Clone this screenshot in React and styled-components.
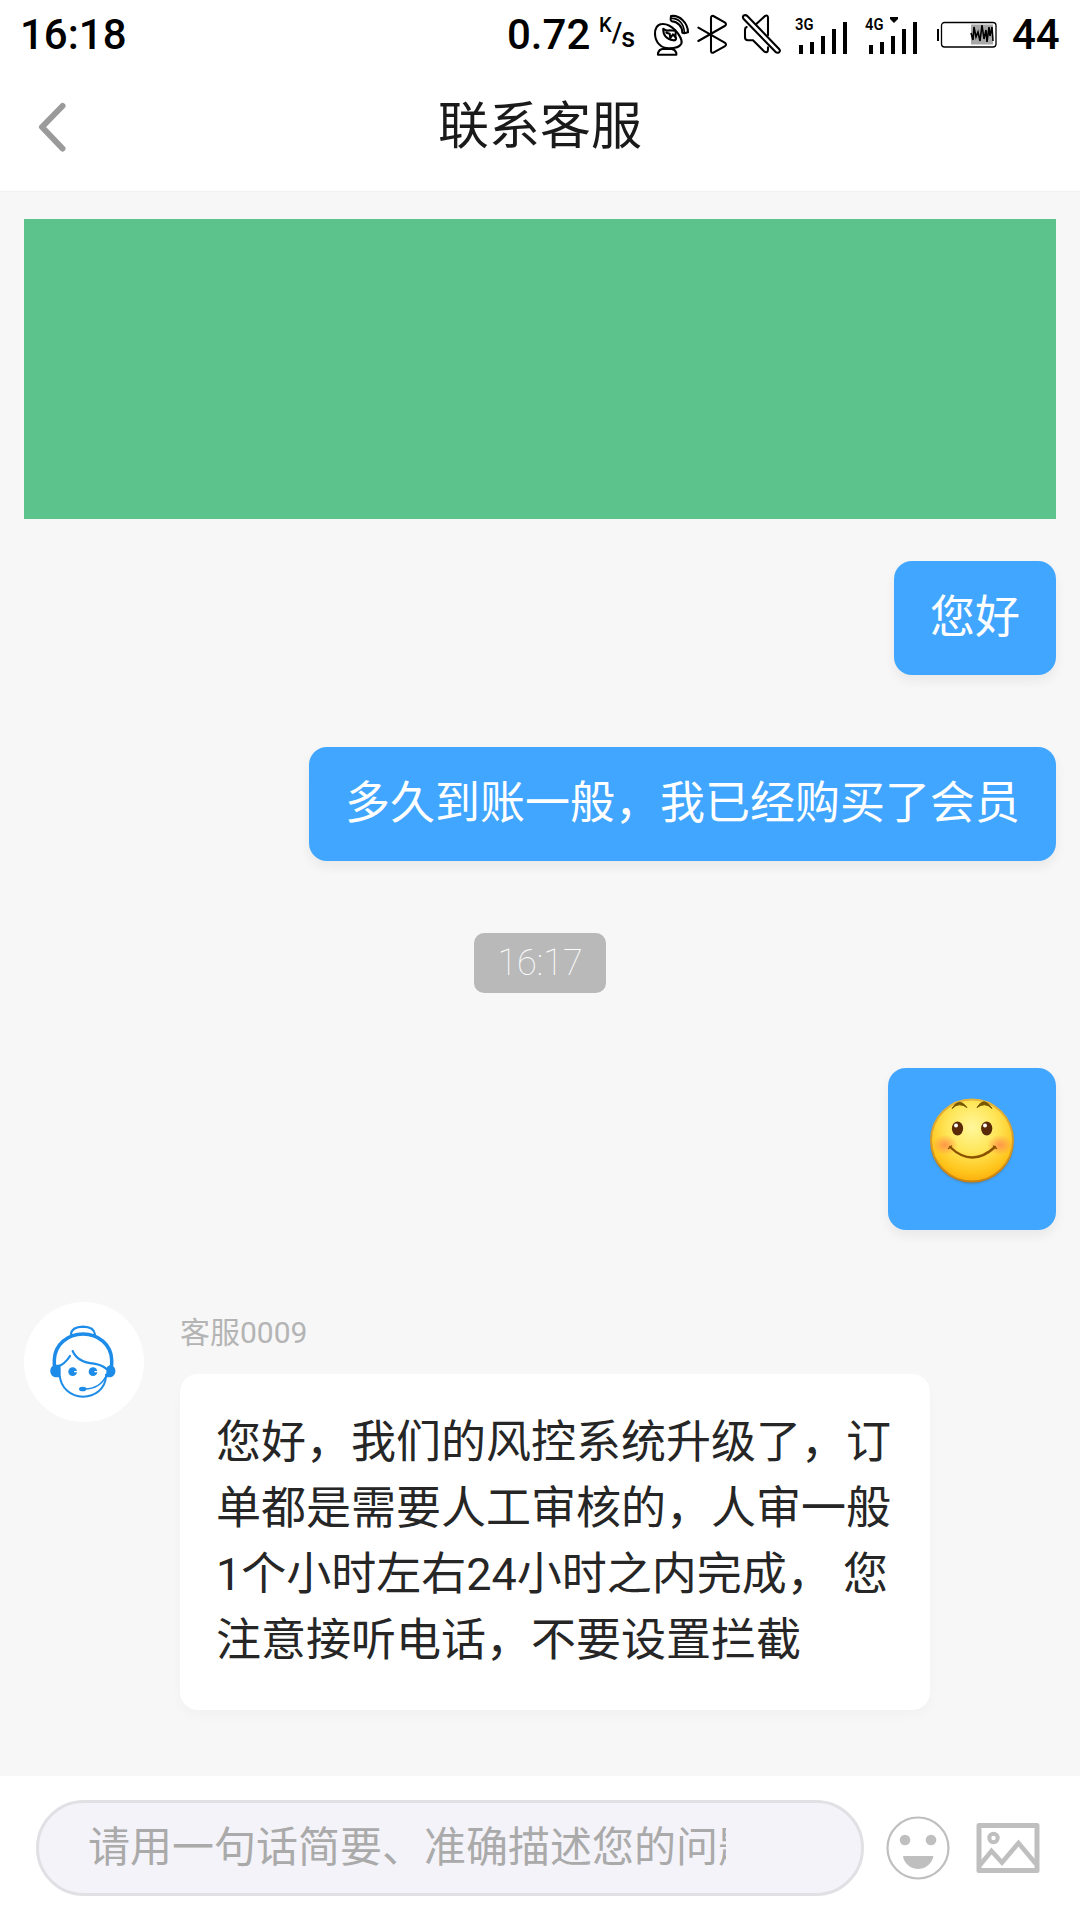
import React from 'react';
import styled, { createGlobalStyle } from 'styled-components';

const GlobalStyle = createGlobalStyle`
  * {
    box-sizing: border-box;
  }

  body {
    margin: 0;
    background: #f7f7f7;
    font-family: Roboto, 'Noto Sans CJK SC', sans-serif;
  }
`;

const DishIcon = () => (
  <svg width="40" height="46" viewBox="456 36 120 138" fill="none" stroke="#000" strokeWidth="6.2" strokeLinejoin="round" strokeLinecap="round">
    <path d="M474 164v-5q4-11 13-12h28q11 2 14 12v5z" />
    <path d="M486 72c-14 0-22 15-21 30 1 24 17 43 42 43 17 0 32-5 37-14 4-9-5-27-19-41-12-12-27-19-39-18z" />
    <path d="M490 86c-1 15 6 31 30 35 9 1 10-6 5-13" />
    <path d="M491 87q9 7 17 4l17 1q4 1 2 6l-1 13-7-8-8 11-2-13-10-3" />
    <path d="M513 48c26-4 51 21 51 49l-11 3-6-2c0-19-14-33-32-34l-3-5z" />
    <path d="M516 55c21 0 36 17 37 42" strokeWidth="5" />
  </svg>
);

const BluetoothIcon = () => (
  <svg width="34" height="46" viewBox="588 36 102 138" fill="none" stroke="#000" strokeWidth="6.2" strokeLinejoin="round" strokeLinecap="round">
    <path d="M595 83l79 45q8 6 0 11l-34 19q-7 2-7-6V54q0-8 7-6l34 19q8 6 0 11l-79 45" />
  </svg>
);

const MuteIcon = () => (
  <svg width="42" height="46" viewBox="723 36 126 138" fill="none" stroke="#000" strokeWidth="6.2" strokeLinejoin="round" strokeLinecap="round">
    <path d="M769 72l26-24q8-4 9 4v54M740 81q-5 2-5 8v23q0 9 9 9h15l33 33q12 7 12-6v-6" />
    <path d="M730 47q7-4 12 1l96 100q4 5-1 9-6 3-10-1L731 57q-4-5-1-10z" fill="#fff" />
  </svg>
);

const SignalIcon = ({ label, active }) => (
  <svg width="54" height="42" viewBox="0 0 54 42" fill="#000">
    <text x="0" y="16" fontFamily="Roboto" fontSize="16" fontWeight="600" textLength="18.500" lengthAdjust="spacingAndGlyphs">{label}</text>
    <path d="M4 31h4v9H4zM15 28h4v12h-4zM26 22h4v18h-4zM37 15h4v25h-4zM48 8h4v32h-4z" />
    {active && <path d="M25 3h8v2l-4 4-4-4z" />}
  </svg>
);

const BatteryIcon = () => (
  <svg width="60" height="28" viewBox="0 0 60 28" fill="none">
    <rect x="4.5" y="1.5" width="54.500" height="24.500" rx="3" stroke="#000" strokeWidth="1.3" />
    <path d="M0 8h2v12H0z" fill="#000" />
    <rect x="34" y="3.500" width="22" height="20" fill="#a8a8a8" />
    <path d="M34 12l2 7 1-13 2 10 2-5 2 9 2-16 2 14 2-9 1 12 2-15 1 9 2-9 1 14" stroke="#000" strokeWidth="1.6" />
  </svg>
);

const BackIcon = () => (
  <svg width="28" height="50" viewBox="0 0 28 50" fill="none" stroke="#9a9a9a" strokeWidth="6" strokeLinecap="round" strokeLinejoin="round">
    <path d="M24.5 4L4 25l20.5 21.5" />
  </svg>
);

const SmileEmoji = () => (
  <svg width="86" height="88" viewBox="0 0 86 88">
    <defs>
      <radialGradient id="face" cx="50%" cy="34%" r="65%">
        <stop offset="0" stopColor="#fff79b" />
        <stop offset="0.45" stopColor="#ffe75c" />
        <stop offset="0.85" stopColor="#ffc51c" />
        <stop offset="1" stopColor="#fdb00e" />
      </radialGradient>
      <radialGradient id="cheek">
        <stop offset="0" stopColor="#ff8a4c" stopOpacity="0.85" />
        <stop offset="1" stopColor="#ff8a4c" stopOpacity="0" />
      </radialGradient>
      <linearGradient id="rim" x1="0" y1="0" x2="0" y2="1">
        <stop offset="0" stopColor="#e8b53c" />
        <stop offset="1" stopColor="#c98210" />
      </linearGradient>
      <filter id="soft" x="-20%" y="-20%" width="140%" height="140%">
        <feGaussianBlur stdDeviation="1.2" />
      </filter>
    </defs>
    <circle cx="42" cy="44" r="41.500" fill="#4d6a62" opacity="0.6" filter="url(#soft)" />
    <circle cx="42" cy="42.500" r="41" fill="url(#face)" stroke="url(#rim)" strokeWidth="2" />
    <ellipse cx="15" cy="47" rx="13" ry="10" fill="url(#cheek)" />
    <ellipse cx="70" cy="47" rx="13" ry="10" fill="url(#cheek)" />
    <path d="M22 10.500q7-12 15-1-8-6-15 1zM47 9.500q7-12 15 1-7-7-15-1z" fill="#785800" stroke="#785800" strokeWidth="1" />
    <ellipse cx="27.500" cy="30.500" rx="5.600" ry="7" fill="#5a2a06" />
    <ellipse cx="56.700" cy="30.500" rx="5.600" ry="7" fill="#5a2a06" />
    <circle cx="26" cy="27.500" r="2" fill="#fff" />
    <circle cx="55" cy="27.500" r="2" fill="#fff" />
    <path d="M20 49q22 21 45 0" fill="none" stroke="#8b5200" strokeWidth="2.400" strokeLinecap="round" />
    <path d="M18.500 50.500l3-2.500M63.500 48l3 2.500" stroke="#8b5200" strokeWidth="1.500" strokeLinecap="round" />
  </svg>
);

const AgentIcon = () => (
  <svg width="66" height="74" viewBox="152 136 198 222" fill="none" stroke="#1c8ce8" strokeWidth="6.500" strokeLinecap="round">
    <path d="M215 164q2-22 36-23 33 1 36 23" />
    <path d="M165 256v-16c2-46 40-77 86-77s84 31 86 77v16" strokeWidth="10.500" />
    <path d="M180 258c5 0 22-12 32-29M220 214c12 28 42 36 64 38q25 4 40 18" />
    <path d="M181 262v24c3 40 34 65 70 65s66-23 69-60v-6" strokeWidth="6" />
    <path d="M178 255h-12c-18 6-18 33 2 38h14v-32zM323 262l10-7c20 4 20 33 2 38h-16z" fill="#1c8ce8" stroke="none" />
    <path d="M322 286q-20 42-66 42" strokeWidth="5" />
    <ellipse cx="250" cy="328" rx="11" ry="7" fill="#1c8ce8" stroke="none" />
    <circle cx="220" cy="276" r="13" fill="#1c8ce8" stroke="none" />
    <circle cx="281" cy="276" r="13" fill="#1c8ce8" stroke="none" />
    <path d="M226 276h7M287 276h7" stroke="#fff" strokeWidth="4" />
  </svg>
);

const FaceIcon = () => (
  <svg width="64" height="64" viewBox="0 0 64 64" fill="#bfbfbf">
    <circle cx="32" cy="32" r="30.500" fill="none" stroke="#bfbfbf" strokeWidth="2.200" />
    <circle cx="19" cy="24" r="5.300" />
    <circle cx="45" cy="24" r="5.300" />
    <path d="M18 40h28.500c1 0 1 .6.500 2-3 7.500-8.500 11-14.800 11S20 49.500 17.300 42c-.4-1.400-.3-2 .7-2z" />
  </svg>
);

const PictureIcon = () => (
  <svg width="64" height="50" viewBox="0 0 64 50" fill="none" stroke="#bfbfbf">
    <rect x="3" y="2.500" width="58" height="45" strokeWidth="5" strokeLinejoin="round" />
    <circle cx="17.500" cy="15" r="4.200" strokeWidth="4" />
    <path d="M4 42l11.500-14L26 39.500 42.500 20 60 41" strokeWidth="4.600" />
  </svg>
);

const Screen = styled.div`
  display: flex;
  flex-direction: column;
  width: 1080px;
  height: 1920px;
  overflow: hidden;
  background: #f7f7f7;
`;

const StatusBar = styled.div`
  display: flex;
  flex: none;
  align-items: center;
  height: 70px;
  padding: 0 20px;
  background: #fff;
  color: #000;
  font-size: 42px;
  font-weight: 500;
  line-height: 70px;
  white-space: nowrap;

  svg {
    flex: none;
  }
`;

const Clock = styled.div`
  width: 487px;
`;

const Speed = styled.div`
  width: 92px;
`;

const SpeedUnit = styled.div`
  display: flex;
  align-items: flex-start;
  width: 53px;
  height: 46px;
  font-size: 20px;
  line-height: 22px;

  span:nth-child(1) {
    margin-top: 2px;
  }

  span:nth-child(2) {
    margin: 10px -1px 0 0;
    font-size: 27px;
  }

  span:nth-child(3) {
    margin-top: 15px;
    font-size: 27px;
  }
`;

const StatusIcons = styled.div`
  display: flex;
  align-items: center;
  gap: ${props => props.gap}px;
  margin-right: ${props => props.after}px;
`;

const Header = styled.div`
  display: grid;
  flex: none;
  grid-template-columns: 100px 1fr 100px;
  align-items: center;
  height: 122px;
  padding-bottom: 7px;
  background: #fff;
  border-bottom: 1px solid #f1f1f1;
`;

const BackButton = styled.div`
  display: flex;
  padding-left: 38px;
`;

const Title = styled.div`
  color: #1a1a1a;
  font-size: 51px;
  line-height: 60px;
  text-align: center;
`;

const Messages = styled.div`
  display: flex;
  flex-direction: column;
  align-items: flex-end;
  flex: 1;
  min-height: 0;
  padding: 27px 24px 0;

  > * {
    flex-shrink: 0;
  }
`;

const Banner = styled.div`
  width: 100%;
  height: 300px;
  margin-bottom: 42px;
  background: #5dc38c;
`;

const Bubble = styled.div`
  padding: 24px 36px;
  margin-bottom: 72px;
  border-radius: 18px;
  background: #41a6ff;
  box-shadow: 0 6px 12px rgba(0, 0, 0, 0.06);
  color: #fff;
  font-size: 45px;
  line-height: 66px;
`;

const EmojiBubble = styled(Bubble)`
  width: 168px;
  height: 162px;
  padding: 30px 42px;
  line-height: 0;
`;

const TimeChip = styled.div`
  align-self: center;
  width: 132px;
  height: 60px;
  margin-bottom: 75px;
  border-radius: 10px;
  background: #b9b9b9;
  color: #fff;
  font-size: 36px;
  font-weight: 100;
  line-height: 60px;
  text-align: center;
`;

const Reply = styled.div`
  display: flex;
  align-self: flex-start;
  gap: 36px;
`;

const Avatar = styled.div`
  display: flex;
  justify-content: center;
  width: 120px;
  height: 120px;
  padding: 23px 2px 0 0;
  border-radius: 50%;
  background: #fff;
`;

const AgentName = styled.div`
  height: 72px;
  color: #b4b4b4;
  font-size: 30px;
  line-height: 62px;
`;

const ReplyBubble = styled(Bubble)`
  width: 750px;
  margin-bottom: 0;
  padding: 36px;
  background: #fff;
  box-shadow: 0 6px 12px rgba(0, 0, 0, 0.025);
  color: #262626;
  white-space: nowrap;
`;

const Composer = styled.div`
  display: flex;
  flex: none;
  align-items: center;
  height: 144px;
  padding-left: 36px;
  background: #fff;
`;

const Field = styled.div`
  width: 828px;
  height: 96px;
  margin-right: 22px;
  padding: 0 135px 0 49px;
  border: 3px solid #e0e0e5;
  border-radius: 48px;
  background: #f4f3f9;
`;

const Placeholder = styled.div`
  overflow: hidden;
  color: #aaa;
  font-size: 42px;
  line-height: 90px;
  white-space: nowrap;
`;

const Tools = styled.div`
  display: flex;
  align-items: center;
  gap: 26px;
`;

const App = () => {
  return (
    <Screen>
      <GlobalStyle />
      <StatusBar>
        <Clock>16:18</Clock>
        <Speed>0.72</Speed>
        <SpeedUnit>
          <span>K</span>
          <span>/</span>
          <span>s</span>
        </SpeedUnit>
        <StatusIcons gap={4} after={11}>
          <DishIcon />
          <BluetoothIcon />
        </StatusIcons>
        <StatusIcons gap={0} after={12}>
          <MuteIcon />
        </StatusIcons>
        <StatusIcons gap={16} after={18}>
          <SignalIcon label="3G" />
          <SignalIcon label="4G" active />
        </StatusIcons>
        <StatusIcons gap={0} after={15}>
          <BatteryIcon />
        </StatusIcons>
        <span>44</span>
      </StatusBar>
      <Header>
        <BackButton>
          <BackIcon />
        </BackButton>
        <Title>联系客服</Title>
      </Header>
      <Messages>
        <Banner />
        <Bubble>您好</Bubble>
        <Bubble>多久到账一般，我已经购买了会员</Bubble>
        <TimeChip>16:17</TimeChip>
        <EmojiBubble>
          <SmileEmoji />
        </EmojiBubble>
        <Reply>
          <Avatar>
            <AgentIcon />
          </Avatar>
          <div>
            <AgentName>客服0009</AgentName>
            <ReplyBubble>
              您好，我们的风控系统升级了，订<br />
              单都是需要人工审核的，人审一般<br />
              1个小时左右24小时之内完成， 您<br />
              注意接听电话，不要设置拦截
            </ReplyBubble>
          </div>
        </Reply>
      </Messages>
      <Composer>
        <Field>
          <Placeholder>请用一句话简要、准确描述您的问题</Placeholder>
        </Field>
        <Tools>
          <FaceIcon />
          <PictureIcon />
        </Tools>
      </Composer>
    </Screen>
  );
};

export default App;
